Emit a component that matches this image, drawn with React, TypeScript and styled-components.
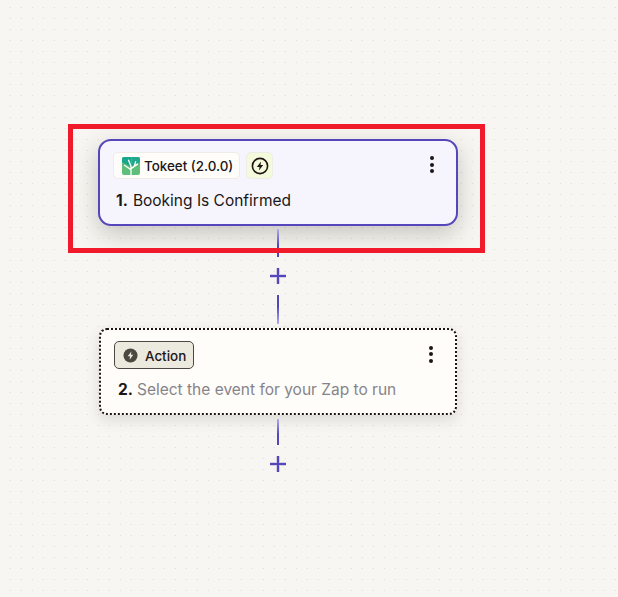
import React from 'react';
import styled, { createGlobalStyle } from 'styled-components';

const GlobalStyle = createGlobalStyle`
  html, body {
    margin: 0;
    padding: 0;
    width: 618px;
    height: 597px;
    overflow: hidden;
    background: #f7f6f2;
    font-family: Inter, 'Liberation Sans', sans-serif;
  }
`;

const Canvas = styled.div`
  position: relative;
  box-sizing: border-box;
  width: 618px;
  height: 597px;
  padding: 139px 0 0 98px;
  background-color: #f7f6f2;
  background-image: radial-gradient(ellipse 1.1px 0.8px at 10.5px 7.5px, #e2e0da 60%, transparent 100%);
  background-size: 11px 11px;
`;

const Flow = styled.div`
  display: flex;
  flex-direction: column;
  align-items: center;
  width: 360px;
`;

const Card = styled.div<{ $variant: 'trigger' | 'empty' }>`
  box-sizing: border-box;
  width: ${p => (p.$variant === 'trigger' ? '360px' : '358px')};
  height: 87px;
  margin-top: ${p => (p.$variant === 'trigger' ? '0' : '4px')};
  padding: 11px 13px;
  border-radius: ${p => (p.$variant === 'trigger' ? '13px' : '8px')};
  background: ${p => (p.$variant === 'trigger' ? '#f6f5fd' : '#fffdf9')};
  border: 2px ${p => (p.$variant === 'trigger' ? 'solid #5546bc' : 'dotted #201515')};
  box-shadow: ${p =>
    p.$variant === 'trigger'
      ? '0 8px 24px rgba(60, 55, 40, 0.26)'
      : '0 5px 14px rgba(60, 55, 40, 0.14)'};
`;

const CardTop = styled.div<{ $h: number }>`
  display: flex;
  align-items: center;
  gap: 6px;
  height: ${p => p.$h}px;
`;

const AppChip = styled.div`
  display: flex;
  align-items: center;
  gap: 4px;
  box-sizing: border-box;
  height: 27px;
  width: 127px;
  padding: 0 0 0 8px;
  border: 1px solid #eeece5;
  border-radius: 5px;
  background: #fffdf9;
  font-size: 13.4px;
  font-weight: 500;
  color: #201515;
  white-space: nowrap;
`;

const BoltChip = styled.div`
  display: flex;
  align-items: center;
  justify-content: center;
  box-sizing: border-box;
  width: 27px;
  height: 27px;
  border: 1px solid #eeece5;
  border-radius: 5px;
  background: #f3fbdc;
`;

const ActionChip = styled.div`
  display: flex;
  align-items: center;
  gap: 7px;
  box-sizing: border-box;
  height: 28px;
  width: 80px;
  padding: 1px 0 0 8px;
  border: 1px solid #4d4741;
  border-radius: 5px;
  background: #ece9df;
  font-size: 13.4px;
  font-weight: 500;
  color: #201515;
`;

const MenuButton = styled.div`
  margin-left: auto;
  margin-top: -2px;
  display: flex;
  flex-direction: column;
  gap: 2.5px;
  padding-right: 9px;
`;

const MenuDot = styled.span`
  display: block;
  width: 4px;
  height: 4px;
  border-radius: 50%;
  background: #201515;
`;

const Title = styled.div<{ $variant: 'trigger' | 'empty' }>`
  margin-top: ${p => (p.$variant === 'trigger' ? '12px' : '11px')};
  padding-left: ${p => (p.$variant === 'trigger' ? '3px' : '4px')};
  font-size: 15.5px;
  line-height: 20px;
  color: #201515;
  white-space: nowrap;
`;

const Step = styled.strong<{ $gap: number }>`
  font-weight: 700;
  color: #201515;
  margin-right: ${p => p.$gap}px;
`;

const Muted = styled.span`
  color: #86848a;
`;

const Link = styled.div<{ $h: number; $dir: 'down' | 'up'; $before?: number }>`
  width: 2px;
  height: ${p => p.$h}px;
  margin-top: ${p => p.$before ?? 0}px;
  background: linear-gradient(
    ${p => (p.$dir === 'down' ? 'to bottom' : 'to top')},
    #b3acec 0%,
    #5546bc 60%
  );
`;

const AddButton = styled.div`
  display: flex;
  align-items: center;
  justify-content: center;
  height: 16px;
  margin: 11px 0;
  color: #5546bc;
`;

const Highlight = styled.div`
  position: absolute;
  left: 68px;
  top: 124px;
  box-sizing: border-box;
  width: 417px;
  height: 129px;
  border: 5px solid #f01a2a;
  pointer-events: none;
`;

const BoltCircle: React.FC<{ filled?: boolean }> = ({ filled }) =>
  filled ? (
    <svg width="15" height="15" viewBox="0 0 16 16">
      <circle cx="8" cy="8" r="7.5" fill="#4d4741" />
      <path d="M8.9 3.6 5 8.8h2.5l-.4 3.6L11 7.2H8.5z" fill="#ece9df" />
    </svg>
  ) : (
    <svg width="18" height="18" viewBox="0 0 18 18">
      <circle cx="9" cy="9" r="7.6" fill="none" stroke="#201515" strokeWidth="1.6" />
      <path d="M10 4.6 5.8 9.9h2.7l-.5 3.5 4.2-5.3H9.5z" fill="#201515" />
    </svg>
  );

const TokeetLogo = () => (
  <svg width="18" height="18" viewBox="0 0 17 17" style={{ flex: 'none' }}>
    <rect x="0" y="0" width="17" height="17" rx="2" fill="#5fbf7a" />
    <path d="M0 2a2 2 0 0 1 2-2h6.5L8 9 0 5z" fill="#17a58c" />
    <path d="M9 0h6a2 2 0 0 1 2 2v3l-8 4z" fill="#1fa88e" />
    <path
      d="M8.5 17V9M8.5 12 2 7.5M8.5 9 6 2.5M8.5 11 15 6.5M11.5 9l1.5-5"
      fill="none"
      stroke="#fff"
      strokeWidth="1.2"
    />
  </svg>
);

const Plus = () => (
  <svg width="16" height="16" viewBox="0 0 16 16">
    <path d="M8 0v16M0 8h16" stroke="currentColor" strokeOpacity="0.22" strokeWidth="4" />
    <path d="M8 0v16M0 8h16" stroke="currentColor" strokeWidth="2" />
  </svg>
);

const Menu = () => (
  <MenuButton>
    <MenuDot />
    <MenuDot />
    <MenuDot />
  </MenuButton>
);

export default function App() {
  return (
    <Canvas>
      <GlobalStyle />
      <Flow>
        <Card $variant="trigger">
          <CardTop $h={27}>
            <AppChip>
              <TokeetLogo />
              Tokeet (2.0.0)
            </AppChip>
            <BoltChip>
              <BoltCircle />
            </BoltChip>
            <Menu />
          </CardTop>
          <Title $variant="trigger">
            <Step $gap={5}>1.</Step>Booking Is Confirmed
          </Title>
        </Card>
        <Link $h={28} $dir="down" $before={3} />
        <AddButton>
          <Plus />
        </AddButton>
        <Link $h={29} $dir="up" />
        <Card $variant="empty">
          <CardTop $h={28}>
            <ActionChip>
              <BoltCircle filled />
              Action
            </ActionChip>
            <Menu />
          </CardTop>
          <Title $variant="empty">
            <Step $gap={4}>2.</Step>
            <Muted>Select the event for your Zap to run</Muted>
          </Title>
        </Card>
        <Link $h={26} $dir="down" $before={4} />
        <AddButton>
          <Plus />
        </AddButton>
      </Flow>
      <Highlight />
    </Canvas>
  );
}
